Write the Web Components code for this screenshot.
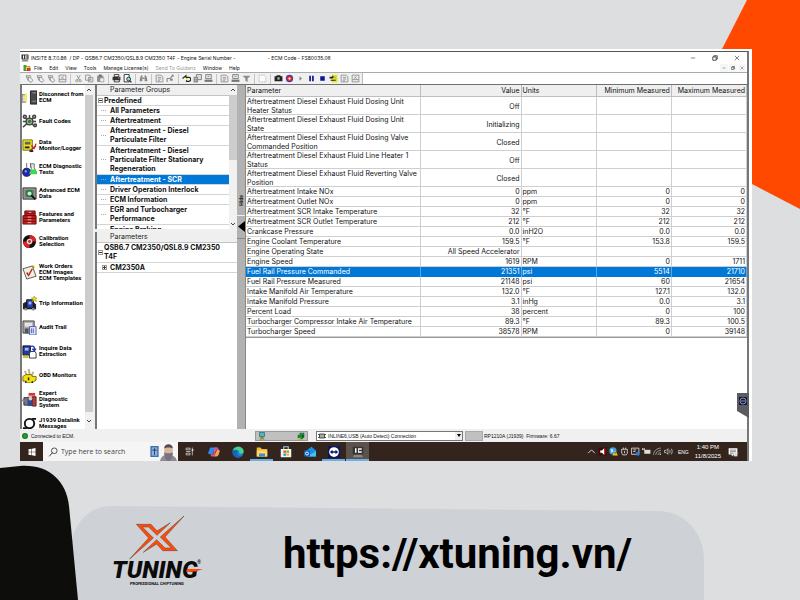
<!DOCTYPE html>
<html lang="en">
<head>
<meta charset="utf-8">
<title>INSITE</title>
<style>
  html, body { margin: 0; height: 100%; }
  body { font-family: Inter, "Liberation Sans", sans-serif; font-size: 7px; color: #111; }
</style>
</head>
<body>
<poster-page></poster-page>
<script>
const BASE = `
  * { box-sizing: border-box; }
  button { font: inherit; color: inherit; background: none; border: 0; margin: 0; padding: 0; text-align: left; }
  svg { display: block; }
`;
function element(name, html, setup) {
  const tpl = document.createElement('template');
  customElements.define(name, class extends HTMLElement {
    constructor() {
      super();
      tpl.innerHTML = `<style>${BASE}</style>` + (typeof html === 'function' ? html(this) : html);
      this.attachShadow({ mode: 'open' }).append(tpl.content.cloneNode(true));
      if (setup) setup(this, this.shadowRoot);
    }
  });
}

/* ---------- icons, all on a 16 x 16 grid ---------- */
const G = '#8c8c8c';
const ICONS = {
  connect: `<path d="M0 5h4v8H0z" fill="#d8d8d8" stroke="#777"/><path d="M3 4l2-1v8l-2 2z" fill="#fff13b"/><path d="M9 1h7v14H9z" fill="#4a4a4a" stroke="#222"/><path d="M11 3h4M11 12h4" stroke="#999"/>`,
  fault: `<g stroke="#444" stroke-width="1.5" fill="#bbb"><path d="M8 8L2 3M8 8l6-6M8 8L1 14M8 8l6 6M8 8V1M8 8H1M8 8h7"/><circle cx="8" cy="8" r="3.6"/><circle cx="3" cy="3" r="1.6"/><circle cx="13" cy="3" r="1.6"/><circle cx="14" cy="12" r="1.4"/></g><circle cx="8" cy="8" r="2.2" fill="#1aa334"/><circle cx="8.500" cy="7" r="1" fill="#d22"/>`,
  data: `<path d="M1 2h10v11H1z" fill="#ece52a" stroke="#77700c"/><path d="M3 4h6v3H3z" fill="#5c6a4a"/><path d="M3 9h5v2H3z" fill="#222"/><path d="M9 12c3 1 3-3 6-3M10 8l3 3 2-5" stroke="#b22" fill="none" stroke-width="1.300"/><path d="M8 14h4" stroke="#222" stroke-width="2"/>`,
  flask: `<path d="M5 1v5l-1 1M9 1v5" stroke="#666" fill="none"/><circle cx="5" cy="11" r="4.300" fill="#1c25c8" stroke="#222"/><path d="M9 2h4v4l3 6H8l2-5z" fill="#dff5df" stroke="#667"/><path d="M10 8h4l2 5H8z" fill="#31e04a"/><circle cx="4" cy="10" r="1.200" fill="#9ab"/>`,
  ecm: `<path d="M1 2h14v12H1z" fill="#9a9a9a" stroke="#333"/><path d="M3 4h10v8H3z" fill="#6f7d73"/><circle cx="8" cy="8" r="3" fill="#cfe8d4" stroke="#157a35" stroke-width="1.500"/><path d="M10 10l4 4" stroke="#111" stroke-width="2"/>`,
  cabinet: `<path d="M3 1h11v5H3zM1 6h14v9H1z" fill="#c81e1e" stroke="#6b0d0d"/><path d="M3 3.500h11M1 9h14M1 12h14" stroke="#6b0d0d"/><path d="M7 2.500h3M6 7.500h4M6 10.500h4M6 13.500h4" stroke="#f7b1b1"/>`,
  calib: `<circle cx="8" cy="8" r="7" fill="#111"/><path d="M8 1a7 7 0 0 1 7 7L8 8zM8 15a7 7 0 0 1-7-7l7 0z" fill="#e02222"/><circle cx="8" cy="8" r="3" fill="#ddd"/><circle cx="8" cy="8" r="1.500" fill="#c22"/>`,
  order: `<path d="M1 4l10-3 4 11-10 3z" fill="#f3efe0" stroke="#555"/><path d="M5 8l2 3 4-7" stroke="#c02020" stroke-width="1.500" fill="none"/><path d="M11 1l2 2" stroke="#b90" stroke-width="2"/>`,
  trip: `<path d="M1 8l3-2h8l3 3v5H1z" fill="#222"/><path d="M5 4h7v9H5z" fill="#2b3fae" stroke="#111"/><path d="M7 6h3v3H7z" fill="#9fb6ff"/><path d="M13 0l1 2 2 0-1.500 1.500 1 2.500-2.500-1.500L11 6l.5-2.500L10 2h2z" fill="#f0dc20" stroke="#8a7a00" stroke-width=".500"/><circle cx="4" cy="14" r="1.500" fill="#888"/><circle cx="12" cy="14" r="1.500" fill="#888"/>`,
  audit: `<path d="M1 1h12v13H1z" fill="#aaa" stroke="#444"/><path d="M3 3h8v4H3z" fill="#e6e6e6"/><path d="M3 9h4v5H3z" fill="#555"/><path d="M8 7h7v9H8z" fill="#dfe2ff" stroke="#5560a8"/><path d="M10 9v5M12 9v5" stroke="#4a56c0"/>`,
  inquire: `<path d="M1 2h8v10H1z" fill="#2438a8" stroke="#111"/><path d="M3 4h4v3H3z" fill="#a9bdf5"/><path d="M8 3c4-2 6 0 5 4M11 5l2 2 2-2" stroke="#1c2fc0" fill="none" stroke-width="1.400"/><path d="M9 8h5l1 2v5H8v-5z" fill="#fff" stroke="#333"/><path d="M1 12h6v3H1z" fill="#c8c14a"/>`,
  obd: `<path d="M3 3l3 7M7 1l2 9M12 4l-2 6" stroke="#b8b090" stroke-width="2"/><path d="M1 9l3-2h6l1 2h4v4l-2 1-2 2H6l-2-2H1z" fill="#f2df12" stroke="#7a6d00"/><path d="M4 14v2M11 14v2M7 10v3" stroke="#222" stroke-width="1.500"/>`,
  expert: `<path d="M2 6h6v8H2z" fill="#777" stroke="#333"/><path d="M7 1h7v3H7z" fill="#d33"/><path d="M6 5h5v10H6z" fill="#324a9c"/><path d="M11 5h4v10h-4z" fill="#b23c3c" stroke="#522"/><circle cx="9" cy="7" r="2" fill="#e8c9a8"/><path d="M0 9h3" stroke="#88a" stroke-width="2"/>`,
  link: `<circle cx="8" cy="8" r="5" fill="none" stroke="#111" stroke-width="2"/><path d="M10 2h5v2h-3zM6 14H1v-2h3z" fill="#111"/>`,
  app: `<path d="M1 1h14v10H1z" fill="#333"/><path d="M4 3h2v6H4zM8 3h5v2H9v2h4v2H8z" fill="#fff"/><path d="M3 12h10l2 3H1z" fill="#888"/>`,
  plug: `<path d="M1 2h6v12H1z" fill="#38a838"/><path d="M5 5h9v8H5z" fill="#ecd92a" stroke="#6a6212"/><path d="M8 8h7v6H8z" fill="#d03838"/>`,
  hand: `<path d="M2 3h8v4l4 4-3 4-6-4z" fill="none" stroke="${G}" stroke-width="1.500"/><path d="M6 5v7M3 6h6" stroke="${G}" stroke-width="1.500"/>`,
  doc: `<path d="M2 2h9l3 3v9H2z" fill="none" stroke="${G}" stroke-width="1.500"/><path d="M5 6h6M5 9h6M5 12h4" stroke="${G}" stroke-width="1.500"/>`,
  grid: `<path d="M2 2h12v12H2z" fill="none" stroke="${G}" stroke-width="1.500"/><path d="M2 10h12M6 5l4 4M10 4L6 8" stroke="${G}" stroke-width="1.500"/>`,
  cut: `<path d="M5 2l5 9M11 2L6 11" stroke="${G}" stroke-width="1.500"/><circle cx="5" cy="12" r="2" fill="none" stroke="${G}" stroke-width="1.500"/><circle cx="11" cy="12" r="2" fill="none" stroke="${G}" stroke-width="1.500"/>`,
  copy: `<path d="M1 2h8v9H1zM6 6h8v8H6z" fill="#f0f0f0" stroke="${G}" stroke-width="1.500"/><path d="M8 9h4M8 11h4" stroke="${G}"/>`,
  paste: `<path d="M2 3h11v11H2z" fill="${G}"/><path d="M5 1h5v3H5z" fill="#666"/><path d="M7 7h7v7H7z" fill="#eee" stroke="${G}"/>`,
  print: `<path d="M4 1h8v4H4zM4 10h9v4H4z" fill="#fff" stroke="#222" stroke-width="1.500"/><path d="M1 5h14v6H1z" fill="#333"/><path d="M11 7h2" stroke="#fff"/>`,
  preview: `<path d="M2 1h9v13H2z" fill="#fff" stroke="#222" stroke-width="1.500"/><circle cx="10" cy="9" r="3.500" fill="#7ee0e6" stroke="#222" stroke-width="1.500"/><path d="M12 12l3 3" stroke="#222" stroke-width="2"/>`,
  find: `<path d="M2 6l2-4h2v11H1zM14 6l-2-4h-2v11h5z" fill="${G}"/><path d="M6 6h4v3H6z" fill="${G}"/>`,
  swap: `<path d="M2 14V8h5l5-5" fill="none" stroke="${G}" stroke-width="2"/><circle cx="12" cy="3" r="2" fill="${G}"/><path d="M7 8h5v4H7z" fill="${G}"/>`,
  back: `<path d="M1 8l6-5v3h5a3 3 0 0 1 0 7H8v-2" fill="#fff" stroke="#222" stroke-width="2"/><path d="M7 7h4v3H7z" fill="#eadf2a"/>`,
  copy2: `<path d="M6 1h9v9H6z" fill="#ddd" stroke="#777" stroke-width="1.500"/><path d="M1 5h8v10H1z" fill="#8a8a8a"/><path d="M3 8h4M3 11h4" stroke="#eee"/>`,
  disk: `<path d="M3 1h10v7H3z" fill="#eee" stroke="#777" stroke-width="1.500"/><path d="M1 10h14v4H1z" fill="#777"/><path d="M6 4h4" stroke="#777" stroke-width="1.500"/>`,
  filter: `<path d="M1 3h14l-5 5v6l-4-2V8z" fill="${G}"/>`,
  new: `<path d="M2 2h9l3 3v9H2z" fill="#fafafa" stroke="#999" stroke-dasharray="2 1"/>`,
  camera: `<path d="M1 4h3l1-2h6l1 2h3v9H1z" fill="#222"/><circle cx="8" cy="8" r="2.500" fill="#999"/>`,
  record: `<circle cx="8" cy="8" r="6.500" fill="#2443c9"/><circle cx="8" cy="8" r="5" fill="#e8202a"/><circle cx="8" cy="8" r="2" fill="#fff"/>`,
  play: `<path d="M6 4l5 4-5 4z" fill="${G}"/>`,
  pause: `<path d="M4 3h3v10H4zM9 3h3v10H9z" fill="#10109a"/>`,
  stop: `<path d="M4 4h8v8H4z" fill="#10109a"/>`,
  logger: `<path d="M5 1h10v14H5z" fill="#ece52a"/><path d="M1 5h5V2l4 4H7v2H1zM3 10h9v2H3z" fill="#222"/><path d="M12 3v9" stroke="#7a7"/>`,
  search: `<circle cx="10" cy="6" r="4.500" fill="none" stroke="#333" stroke-width="1.300"/><path d="M7 9l-5 6" stroke="#333" stroke-width="1.500"/>`,
  start: `<path d="M1 2.500l6-1v6H1zM8 1.300L15 0v7.500H8zM1 8.500h6v6l-6-1zM8 8.500h7V16l-7-1.300z" fill="#fff"/>`,
  phone: `<path d="M2 0h12v16H2z" fill="#3d6fae"/><path d="M4 2h8v12H4z" fill="#8fb0d8"/><path d="M8 3v10M5 6h6" stroke="#2b4d83" stroke-width="1.500"/>`,
  person: `<path d="M0 16c1-5 4-6 8-6s7 2 8 6z" fill="#8f8a93"/><path d="M4 4c0-4 8-4 8 0v4c0 4-1 6-4 6s-4-2-4-6z" fill="#d9b69d"/><path d="M4 8c0 5 2 8 4 8s4-3 4-8c-2 1-6 1-8 0z" fill="#77727c"/><path d="M4 4c0-5 8-5 8 0-2-1-6-1-8 0z" fill="#55494a"/>`,
  tasks: `<path d="M2 2h7v3H2zM2 11h7v3H2z" fill="none" stroke="#ddd" stroke-width="1.300"/><path d="M2 8h8M13 1v14" stroke="#ddd" stroke-width="1.300"/><path d="M12 4h3v3h-3z" fill="#ddd"/>`,
  copilot: `<path d="M3 2h6l-3 9H2C0 11 0 9 1 7z" fill="#2a8ef0"/><path d="M8 2h4c2 0 2 2 2 3l-3 0-3 9H5c-2 0-1-2-1-3h3z" fill="#e8508a"/><path d="M12 5h2c2 0 2 2 1 4l-1 3c-1 2-2 2-4 2H8z" fill="#f5a04a"/><path d="M9 2h3l1 3h-3z" fill="#9b5be8"/>`,
  edge: `<circle cx="8" cy="8" r="7.500" fill="#1b7fd6"/><path d="M1 6c2-7 14-7 14.500 1 0 4-6 4-6 2 1-4-5-5-8.500-3z" fill="#4ad28a"/><path d="M1 6c3-2 6-1 6 2-2 4 3 7 6 5-4 5-13 1-12-7z" fill="#1466b8"/>`,
  folder: `<path d="M1 2h5l2 2h7v10H1z" fill="#f5b92f"/><path d="M1 6h14v8H1z" fill="#ffd968"/><path d="M4 10h8v4H4z" fill="#3c8ed8"/>`,
  store: `<path d="M1 4h14v11H1z" fill="#f4f4f4"/><path d="M5 4V1h6v3" fill="none" stroke="#9ccbe8" stroke-width="1.500"/><path d="M4.500 6H8v3H4.500z" fill="#f25022"/><path d="M8.500 6H12v3H8.500z" fill="#7fba00"/><path d="M4.500 10H8v3H4.500z" fill="#00a4ef"/><path d="M8.500 10H12v3H8.500z" fill="#ffb900"/>`,
  outlook: `<path d="M3 6l7-5 6 5v8H4z" fill="#1a8fe3"/><path d="M4 14l12-7v7z" fill="#41c4f5"/><path d="M0 6h8v8H0z" fill="#0f5fb5"/><circle cx="4" cy="10" r="2" fill="none" stroke="#fff" stroke-width="1.200"/>`,
  viewer: `<path d="M0 0h16v16H0z" fill="#0d1560"/><circle cx="8" cy="8" r="6.500" fill="#fff"/><path d="M2.500 8L6 5v2h4V5l3.500 3L10 11V9H6v2z" fill="#0d1560"/>`,
  chevron: `<path d="M2 11l6-6 6 6" fill="none" stroke="#eee" stroke-width="1.500"/>`,
  sound: `<path d="M1 1h14v14H1z" fill="#3d0b0b"/><path d="M4 6h3l4-4v12L7 10H4z" fill="#fff"/><path d="M12 3v10" stroke="#e22" stroke-width="2"/>`,
  globe: `<circle cx="7" cy="7" r="6.500" fill="#3aa0e8"/><path d="M3 3l4 1 1 4-4 2z" fill="#bfe6ff"/><path d="M11 6l5 9H6z" fill="#f7c51c"/><path d="M11 9v3" stroke="#222" stroke-width="1.300"/>`,
  usb: `<path d="M3 4h10v7l-2 3H5l-2-3zM6 1v3M10 1v3M8 7v4" fill="none" stroke="#ddd" stroke-width="1.500"/>`,
  screen: `<path d="M1 2h13v11H1z" fill="none" stroke="#ddd" stroke-width="1.500"/><path d="M4 5h5M4 8h4" stroke="#ddd" stroke-width="1.500"/><circle cx="12" cy="12" r="3.500" fill="#2a7de0"/>`,
  battery: `<path d="M4 5h11v7H4z" fill="#ddd"/><path d="M0 4h5M1 2v3M4 2v3" stroke="#ddd" stroke-width="1.500"/>`,
  wifi: `<path d="M1 14C1 7 7 2 14 2M5 14c0-5 4-8 9-8M9 14c0-3 2-4 5-4" fill="none" stroke="#bbb" stroke-width="1.300"/><path d="M12 12h2v2h-2z" fill="#ddd"/>`,
  volume: `<path d="M1 6h3l3-3v10l-3-3H1z" fill="none" stroke="#ddd" stroke-width="1.300"/><path d="M10 5c1 2 1 4 0 6M13 3c2 3 2 7 0 10" fill="none" stroke="#ddd" stroke-width="1.300"/>`,
  note: `<path d="M1 2h14v10H9l-3 3v-3H1z" fill="#fff"/><path d="M3 5h10M3 7.500h10M3 10h6" stroke="#444" stroke-width="1"/><path d="M9 9h6v6H9z" fill="#ddd"/>`,
  min: `<path d="M2 8h12" stroke="#333" stroke-width="1.500"/>`,
  restore: `<path d="M2 5h9v9H2zM5 5V2h9v9h-3" fill="none" stroke="#222" stroke-width="2"/>`,
  close: `<path d="M2 2l12 12M14 2L2 14" stroke="#222" stroke-width="1.500"/>`,
  chip: `<path d="M3 4h10v8H3z" fill="#aaa" stroke="#222" stroke-width="1.500"/><path d="M0 5h3M0 11h3M13 5h3M13 11h3" stroke="#222" stroke-width="1.500"/>`,
  pc: `<path d="M3 1h10v8H3z" fill="#35c0cc" stroke="#333"/><path d="M5 9h6v4H5z" fill="#777"/><path d="M4 13h8v3H4z" fill="#d8c820" stroke="#333" stroke-width=".500"/>`,
  engine: `<path d="M2 6h4V2h3v4h2V2h3v9l-4 3H2z" fill="#1a8f30" stroke="#063"/><path d="M1 12h6v3H1z" fill="#d8c820"/><path d="M10 7h3v3h-3z" fill="#222"/>`
};
customElements.define('ui-icon', class extends HTMLElement {
  constructor() {
    super();
    this.attachShadow({ mode: 'open' }).innerHTML =
      `<style>:host{display:block;flex:none;width:var(--icon,9px);height:var(--icon,9px)}svg{display:block;width:100%;height:100%}</style><svg viewBox="0 0 16 16" aria-hidden="true"></svg>`;
  }
  connectedCallback() { this.shadowRoot.querySelector('svg').innerHTML = ICONS[this.getAttribute('name')] || ''; }
});

element('scroll-rail', `
<style>
  :host { display: flex; flex-direction: column; flex: none; width: 8px; background: #f1f1f1; }
  .cap { height: 10px; flex: none; display: grid; place-items: center; }
  .cap svg { width: 6px; height: 4px; }
  .track { flex: 1; min-height: 0; }
  .thumb { height: var(--thumb, 100%); background: #cdcdcd; }
  .cap.low { height: var(--low, 10px); }
</style>
<div class="cap"><svg viewBox="0 0 6 4"><path d="M1 3l2-2 2 2" fill="none" stroke="#444"/></svg></div>
<div class="track"><div class="thumb"></div></div>
<div class="cap low"><svg viewBox="0 0 6 4"><path d="M1 1l2 2 2-2" fill="none" stroke="#444"/></svg></div>`);

element('title-bar', `
<style>
  :host { display: flex; align-items: center; height: 11px; padding: 0 7px 0 1px; gap: 2px; font-size: 5px; color: #111; white-space: pre; }
  .code { margin-left: 30px; }
  .controls { margin-left: auto; display: flex; gap: 16px; --icon: 6px; }
  ui-icon.logo { --icon: 8px; }
</style>
<ui-icon class="logo" name="app"></ui-icon><slot></slot><span class="code"><slot name="code"></slot></span>
<div class="controls">
  <button aria-label="Minimize"><ui-icon name="min"></ui-icon></button>
  <button aria-label="Restore"><ui-icon name="restore"></ui-icon></button>
  <button aria-label="Close"><ui-icon name="close"></ui-icon></button>
</div>`);

element('menu-bar', `
<style>
  :host { display: flex; align-items: center; height: 10px; padding: 0 1px 0 3px; gap: 7px; font-size: 5px; color: #111; border-bottom: 1px solid #aaa; white-space: nowrap; }
  ui-icon { --icon: 8px; margin-right: -4px; }
  .off { color: #999; }
  .mdi { margin-left: auto; display: flex; gap: 1px; }
  .mdi button { width: 8px; height: 8px; display: grid; place-items: center; background: #f4f6f8; }
  .mdi ui-icon { --icon: 4px; margin: 0; }
</style>
<ui-icon name="plug"></ui-icon>
<button>File</button><button>Edit</button><button>View</button><button>Tools</button><button>Manage License(s)</button><button class="off" disabled>Send To Guidanz</button><button>Window</button><button>Help</button>
<div class="mdi">
  <button aria-label="Minimize document"><ui-icon name="min"></ui-icon></button>
  <button aria-label="Restore document"><ui-icon name="restore"></ui-icon></button>
  <button aria-label="Close document"><ui-icon name="close"></ui-icon></button>
</div>`);

const TOOLS = [['hand','hand','hand','grid'],['cut','copy','paste'],['print','preview'],['find'],['doc','swap'],['back','copy2','disk'],['doc','disk','filter'],['new'],['camera','record','play','pause','stop','logger','doc','grid']];
element('tool-bar', `
<style>
  :host { display: flex; height: 12px; border-bottom: 1px solid #6f6f6f; background: #fff; }
  .bar { display: flex; align-items: center; background: #f0f0f0; padding: 0 1px 0 4px; border-right: 1px solid #bbb; }
  .set { display: flex; }
  .set + .set { border-left: 1px solid #c4c4c4; margin-left: 2px; padding-left: 2px; }
  button { width: 11px; height: 10px; display: grid; place-items: center; }
  ui-icon { --icon: 9px; }
</style>
<div class="bar">${TOOLS.map(s => `<div class="set">${s.map(n => `<button aria-label="${n}"><ui-icon name="${n}"></ui-icon></button>`).join('')}</div>`).join('')}</div>`);

element('nav-item', host => `
<style>
  :host { display: block; flex: none; }
  button { display: flex; align-items: center; gap: 2px; width: 100%; min-height: 24px; }
  :host([tall]) button { min-height: 38px; }
  ui-icon { --icon: 15px; }
  span { line-height: 6px; white-space: pre; }
</style>
<button><ui-icon name="${host.getAttribute('icon')}"></ui-icon><span><slot></slot></span></button>`);

const NAV = [['connect','Disconnect from\nECM'],['fault','Fault Codes'],['data','Data\nMonitor/Logger'],['flask','ECM Diagnostic\nTests'],['ecm','Advanced ECM\nData'],['cabinet','Features and\nParameters'],['calib','Calibration\nSelection'],['order','Work Orders\nECM Images\nECM Templates','tall'],['trip','Trip Information'],['audit','Audit Trail'],['inquire','Inquire Data\nExtraction'],['obd','OBD Monitors'],['expert','Expert\nDiagnostic\nSystem'],['link','J1939 Datalink\nMessages']];
element('side-nav', `
<style>
  :host { display: flex; width: 73px; flex: none; min-height: 0; border-left: 2px solid #777; background: #fff; font: bold 6px Roboto, "Liberation Sans", sans-serif; color: #000; }
  nav { flex: 1; min-width: 0; overflow: hidden; display: flex; flex-direction: column; }
</style>
<nav>${NAV.map(n => `<nav-item icon="${n[0]}" ${n[2] || ''}>${n[1]}</nav-item>`).join('')}</nav>
<scroll-rail style="--low:17px"></scroll-rail>`);

element('tree-row', `
<style>
  :host { display: flex; flex: none; font-weight: bold; line-height: 9px; min-height: 10px; border-bottom: 1px solid #d4d4d4; white-space: pre; color: #111; }
  :host([multi]) { padding-bottom: 1px; }
  :host([selected]) { background: #0078d7; color: #fff; }
  .lead { width: 13px; flex: none; align-self: center; display: flex; justify-content: center; }
  :host([root]) .lead { width: 7px; }
  .lead i { width: 5px; border-top: 1px dotted #aaa; }
  .lead b { display: none; width: 5px; height: 5px; border: 1px solid #999; background: linear-gradient(#333, #333) center / 3px 1px no-repeat; }
  :host([box]) .lead b { display: block; }
  :host([box]) .lead i { display: none; }
  :host([plus]) .lead b { background: linear-gradient(#333, #333) center / 3px 1px no-repeat, linear-gradient(#333, #333) center / 1px 3px no-repeat; }
  :host([plus]) .lead { justify-content: flex-end; padding-right: 3px; }
</style>
<span class="lead"><i></i><b></b></span><slot></slot>`);

element('tree-panel', `
<style>
  :host { display: flex; flex-direction: column; min-height: 0; border-left: 2px solid #777; background: #fff; overflow: hidden; }
  .in { display: flex; flex: 1; min-height: 0; }
  .list { flex: 1; min-width: 0; overflow: hidden; display: flex; flex-direction: column; }
  header { flex: none; height: 11px; line-height: 10px; padding-left: 13px; background: #efefef; border-bottom: 1px solid #c4c4c4; color: #222; }
</style>
<div class="in"><div class="list"><header><slot name="head"></slot></header><slot></slot></div><slot name="rail"></slot></div>`);

element('hide-rail', `
<style>
  :host { display: flex; flex-direction: column; flex: none; width: 9px; background: #b2b2b2; border-right: 1px solid #888; }
  .label { height: 38%; display: flex; justify-content: center; align-items: flex-end; border-bottom: 1px solid #eee; padding-bottom: 9px; font: bold 5px "Liberation Sans", sans-serif; }
  span { writing-mode: vertical-rl; rotate: 180deg; line-height: 7px; }
  button { height: 23px; display: grid; place-items: center; border-bottom: 1px solid #888; }
  svg { width: 7px; height: 11px; }
</style>
<div class="label"><span>Hide</span></div>
<button aria-label="Collapse panel"><svg viewBox="0 0 7 11"><path d="M0 5.500L7 0v11z" fill="#000"/></svg></button>`);

const A = 'Aftertreatment ', D = A + 'Diesel Exhaust Fluid ';
const ROWS = [
 [D+'Dosing Unit\nHeater Status','Off','','',''],[D+'Dosing Unit\nState','Initializing','','',''],[D+'Dosing Valve\nCommanded Position','Closed','','',''],[D+'Line Heater 1\nStatus','Off','','',''],[D+'Reverting Valve\nPosition','Closed','','',''],
 [A+'Intake NOx','0','ppm','0','0'],[A+'Outlet NOx','0','ppm','0','0'],[A+'SCR Intake Temperature','32','°F','32','32'],[A+'SCR Outlet Temperature','212','°F','212','212'],['Crankcase Pressure','0.0','inH2O','0.0','0.0'],['Engine Coolant Temperature','159.5','°F','153.8','159.5'],['Engine Operating State','All Speed Accelerator','','',''],['Engine Speed','1619','RPM','0','1711'],['Fuel Rail Pressure Commanded','21351','psi','5514','21710'],['Fuel Rail Pressure Measured','21148','psi','60','21654'],['Intake Manifold Air Temperature','132.0','°F','127.1','132.0'],['Intake Manifold Pressure','3.1','inHg','0.0','3.1'],['Percent Load','38','percent','0','100'],['Turbocharger Compressor Intake Air Temperature','89.3','°F','89.3','100.5'],['Turbocharger Speed','38578','RPM','0','39148']];
element('data-grid', `
<style>
  :host { display: block; flex: 1; min-width: 0; background: #fff; overflow: hidden; }
  table { width: 100%; table-layout: fixed; border-spacing: 0; border-bottom: 1px solid #999; }
  th, td { padding: 0 1px 1px; line-height: 9px; font-weight: normal; white-space: pre; text-align: right; box-shadow: inset -1px -1px #cfcfcf; }
  th { background: #efefef; padding: 1px 1px 2px; box-shadow: inset -1px -1px #bdbdbd; }
  th:nth-child(2n), td:nth-child(2n) { padding-right: 2px; }
  th:last-child, td:last-child { padding-right: 2px; }
  th:first-child, td:first-child, th:nth-child(3), td:nth-child(3) { text-align: left; }
  .two td { padding-bottom: 0; }
  .on td { background: #0078d7; color: #fff; box-shadow: inset -1px 0 #5aa7e6; }
</style>
<table><colgroup><col style="width:35%"><col style="width:20%"><col style="width:15%"><col style="width:15%"><col style="width:15%"></colgroup>
<thead><tr>${['Parameter','Value','Units','Minimum Measured','Maximum Measured'].map(t => `<th scope="col">${t}</th>`).join('')}</tr></thead>
<tbody>${ROWS.map(r => `<tr class="${r[0].includes('\n') ? 'two' : ''}${r[1] === '21351' ? 'on' : ''}">${r.map(c => `<td>${c}</td>`).join('')}</tr>`).join('')}</tbody></table>`);

element('status-bar', `
<style>
  :host { display: flex; align-items: center; height: 13px; background: #f0f0f0; padding-left: 2px; font: 5px "Liberation Sans", sans-serif; color: #111; white-space: pre; }
  .led { width: 6px; height: 6px; border-radius: 50%; background: radial-gradient(#2fae3c, #0a5a14); margin-right: 3px; }
  .msg { width: 224px; }
  .link { width: 53px; height: 10px; display: flex; justify-content: space-between; align-items: center; background: #c0c0c0; border: 1px solid #999; --icon: 8px; padding: 0 2px; }
  .pick { display: flex; align-items: center; width: 147px; height: 10px; margin-left: 8px; border: 1px solid #777; background: #fff; padding-left: 1px; --icon: 8px; }
  select { appearance: none; flex: 1; border: 0; background: #fff; font: inherit; color: inherit; padding: 0 0 0 2px; margin: 0; height: 8px; line-height: 8px; }
  .drop { width: 7px; height: 8px; background: #eee; display: grid; place-items: center; }
  .cell { width: 18px; height: 10px; background: #c0c0c0; border: 1px solid #aaa; margin: 0 1px 0 2px; }
</style>
<span class="led"></span><span class="msg">Connected to ECM.</span>
<span class="link"><ui-icon name="pc"></ui-icon><ui-icon name="engine"></ui-icon></span>
<span class="pick"><ui-icon name="chip"></ui-icon><select aria-label="Adapter connection"><option>INLINE6,USB (Auto Detect) Connection</option></select><span class="drop"><svg width="4" height="3" viewBox="0 0 4 3"><path d="M0 0h4L2 3z" fill="#000"/></svg></span></span>
<span class="cell"></span><span>RP1210A (J1939)  Firmware: 6.67</span>`);

element('task-bar', `
<style>
  :host { display: flex; height: 19px; background: #33251e; color: #fff; font: 7px "Open Sans", sans-serif; align-items: stretch; }
  .start { width: 23px; display: grid; place-items: center; --icon: 8px; }
  .find { display: flex; align-items: center; width: 135px; background: #f5f5f5; padding: 0 1px 0 5px; --icon: 10px; }
  input { flex: 1; min-width: 0; width: 0; border: 0; background: none; font: inherit; color: #333; padding: 0 0 0 3px; margin: 0; }
  input::placeholder { color: #444; opacity: 1; }
  .find .phone { --icon: 11px; }
  .find .hero { --icon: 17px; align-self: flex-end; }
  .apps { display: flex; gap: 1px; }
  .apps button { width: 23px; display: grid; place-items: center; border-bottom: 2px solid transparent; padding-top: 2px; --icon: 12px; }
  .apps button:first-child { --icon: 9px; }
  .apps .live { border-color: #6cb0e8; }
  .apps .on { background: #5c524c; }
  .tray { margin-left: auto; display: flex; align-items: center; gap: 2px; --icon: 9px; padding-right: 9px; font: 6px "Liberation Sans", sans-serif; }
  .tray .lang { margin: 0 4px 0 3px; font-size: 5px; }
  .clock { text-align: center; line-height: 9px; margin-right: 5px; }
  .bell { --icon: 10px; }
</style>
<button class="start" aria-label="Start"><ui-icon name="start"></ui-icon></button>
<label class="find"><ui-icon name="search"></ui-icon><input type="text" aria-label="Search" placeholder="Type here to search"><ui-icon class="phone" name="phone"></ui-icon><ui-icon class="hero" name="person"></ui-icon></label>
<div class="apps">${[['tasks',''],['copilot',''],['edge',''],['folder','live'],['store',''],['outlook',''],['viewer','live'],['app','live on']].map(a => `<button class="${a[1]}" aria-label="${a[0]}"><ui-icon name="${a[0]}"></ui-icon></button>`).join('')}</div>
<div class="tray">${['chevron','sound','globe','usb','screen','battery','wifi','volume'].map(n => `<ui-icon name="${n}"></ui-icon>`).join('')}<span class="lang">ENG</span><span class="clock">1:40 PM<br>11/8/2025</span><ui-icon class="bell" name="note"></ui-icon></div>`);

element('insite-window', `
<style>
  :host { display: flex; flex-direction: column; min-height: 0; background: #fff; border: solid #fff; border-width: 2px 3px 0 0; position: relative; }
  .frame { flex: 1; min-height: 0; display: flex; flex-direction: column; border-top: 1px solid #555; border-right: 2px solid #777; }
  .body { flex: 1; min-height: 0; display: flex; background: #f0f0f0; }
  .panels { width: 142px; flex: none; display: flex; flex-direction: column; gap: 3px; margin-left: 2px; }
  .panels tree-panel:first-child { flex: 0 0 42%; }
  .panels tree-panel:last-child { flex: 1; }
  .tab { position: absolute; right: 0; bottom: 43px; width: 12px; height: 25px; }
</style>
<div class="frame">
<title-bar>INSITE 8.7.0.86  / DP - QSB6.7 CM2350/QSL8.9 CM2350 T4F - Engine Serial Number -<span slot="code">- ECM Code - FS80035.06</span></title-bar>
<menu-bar></menu-bar>
<tool-bar></tool-bar>
<div class="body">
  <side-nav></side-nav>
  <div class="panels">
    <tree-panel><span slot="head">Parameter Groups</span>
      <tree-row root box>Predefined</tree-row><tree-row>All Parameters</tree-row><tree-row>Aftertreatment</tree-row><tree-row multi>Aftertreatment - Diesel
Particulate Filter</tree-row><tree-row multi>Aftertreatment - Diesel
Particulate Filter Stationary
Regeneration</tree-row><tree-row selected>Aftertreatment - SCR</tree-row><tree-row>Driver Operation Interlock</tree-row><tree-row>ECM Information</tree-row><tree-row multi>EGR and Turbocharger
Performance</tree-row><tree-row>Engine Braking</tree-row>
      <scroll-rail slot="rail" style="--thumb:52%"></scroll-rail>
    </tree-panel>
    <tree-panel><span slot="head">Parameters</span>
      <tree-row root box multi>QSB6.7 CM2350/QSL8.9 CM2350
T4F</tree-row><tree-row box plus>CM2350A</tree-row>
    </tree-panel>
  </div>
  <hide-rail></hide-rail>
  <data-grid></data-grid>
</div>
<status-bar></status-bar>
<task-bar></task-bar>
</div>
<svg class="tab" viewBox="0 0 12 25" aria-hidden="true"><path d="M0 0h12v25L0 18z" fill="#5c5c5e"/><path d="M2 4h8v8H2z" fill="#10163f"/><circle cx="6" cy="8" r="3" fill="none" stroke="#8b93b8"/><path d="M4 8h4" stroke="#8b93b8"/></svg>`);

element('brand-footer', `
<style>
  :host { display: flex; height: 139px; flex: none; padding: 54px 0 0 112px; gap: 80px; align-items: flex-start; }
  .logo { width: 91px; flex: none; color: #0b0b0b; display: flex; flex-direction: column; position: relative; }
  .mark { width: 56px; height: 45px; margin-left: 17px; }
  .word { font: italic 900 24px Roboto, "Liberation Sans", sans-serif; line-height: 21px; }
  .sub { font: bold 4px Roboto, "Liberation Sans", sans-serif; line-height: 6px; padding-left: 18px; white-space: nowrap; }
  .dart { position: absolute; right: 0; top: 53px; width: 17px; height: 5px; }
  .reg { position: absolute; right: 2px; top: 44px; font: bold 5px "Liberation Sans", sans-serif; }
  a { font: bold 42px Roboto, "Liberation Sans", sans-serif; line-height: 46px; color: #000; text-decoration: none; margin-top: 16px; white-space: nowrap; }
</style>
<div class="logo">
  <svg class="mark" viewBox="388 182 168 135" aria-hidden="true"><g fill="#ff4a08" stroke="#5a3a30" stroke-width="1.500"><path d="M410 210h44l18 20 40-25-40 38-25-25h-19l33 33-71 63 57-63z"/><path d="M533 289h-44l-18-20-40 25 40-38 25 25h19l-33-33 71-63-57 63z"/></g></svg>
  <span class="word">TUNING</span>
  <span class="sub">PROFESSIONAL CHIPTUNING</span>
  <svg class="dart" viewBox="0 0 17 5" aria-hidden="true"><path d="M1 1l16 0L10 3.500 0 4z" fill="#ff4a08"/></svg>
  <span class="reg">®</span>
</div>
<a href="https://xtuning.vn/">https://xtuning.vn/</a>`);

element('poster-page', `
<style>
  :host { display: flex; flex-direction: column; min-height: 100vh; height: 100vh; position: relative; background: #dddee0; overflow: hidden; }
  .art { position: absolute; inset: 0; width: 100%; height: 100%; }
  insite-window { flex: 1; margin: 49px 48px 0 20px; }
  brand-footer { position: relative; }
</style>
<svg class="art" viewBox="0 0 800 600" preserveAspectRatio="none" aria-hidden="true">
  <path d="M747 0h53v209l-48-25-60-31V108z" fill="#ff4800"/>
  <path d="M68 600V560C70 530 84 506 112 506L658 511C684 511 704 532 704 560V600z" fill="#ced1d6"/>
  <path d="M0 468L20 466C48 464 66 480 69 506L78 600H0z" fill="#0d0d0b"/>
</svg>
<insite-window></insite-window>
<brand-footer></brand-footer>`);
</script>
</body>
</html>
